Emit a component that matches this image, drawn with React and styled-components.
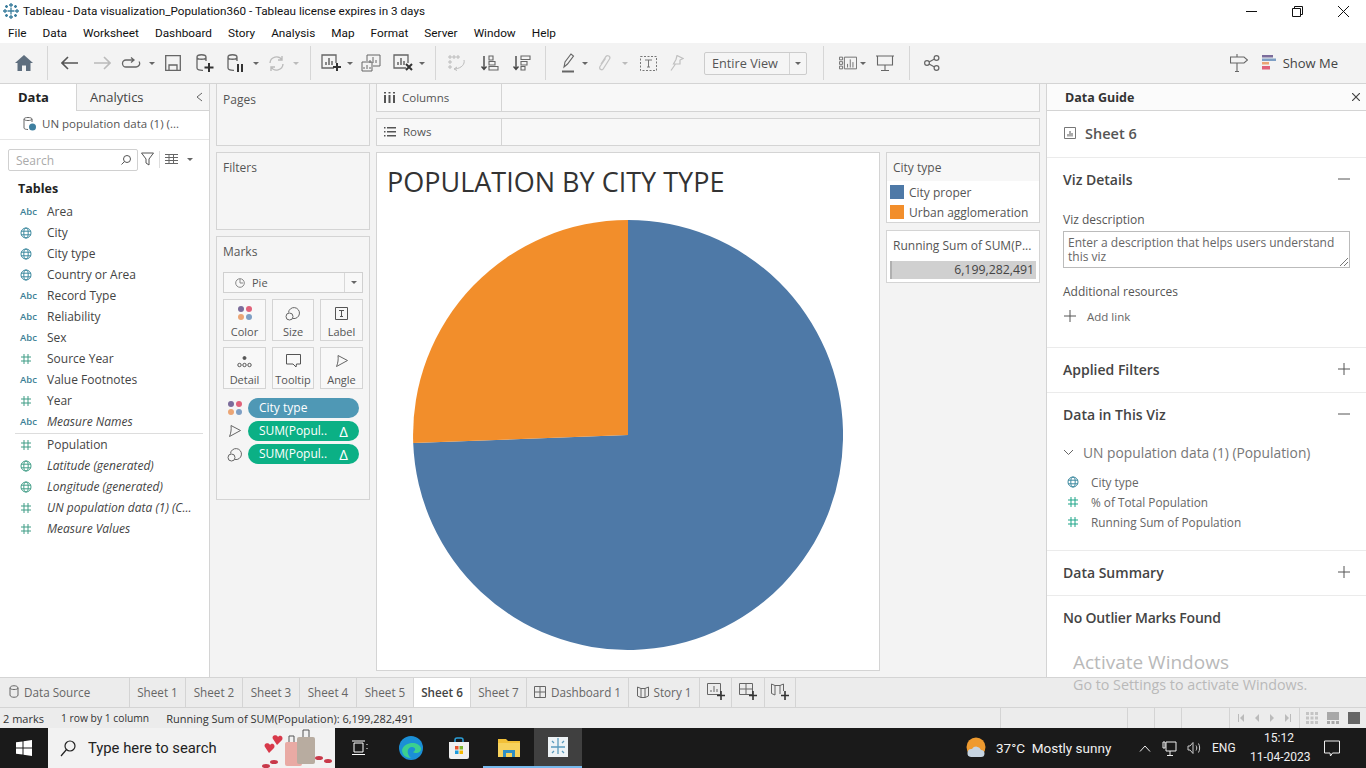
import styled, { createGlobalStyle } from "styled-components"

const Global = createGlobalStyle`
    html, body, #root { margin: 0; padding: 0; height: 100%; }
    body { font-family: "Open Sans", "Liberation Sans", sans-serif; color: #333; overflow: hidden; }
    * { box-sizing: border-box; }
`

const Page = styled.div`
    width: 1366px;
    height: 768px;
    display: flex;
    flex-direction: column;
    position: relative;
    background: #f3f3f3;
    overflow: hidden;
`

const TitleBar = styled.div`
    height: 22px;
    background: #fff;
    display: flex;
    align-items: center;
    padding-left: 2px;
    font-family: Roboto, sans-serif;
    font-size: 11.7px;
    color: #111;
    flex: none;
`
const TitleText = styled.span`
    margin-left: 3px;
`
const WinButtons = styled.div`
    margin-left: auto;
    display: flex;
    align-items: center;
`
const WinButton = styled.div`
    width: 46px;
    height: 20px;
    display: flex;
    align-items: center;
    justify-content: center;
`

const MenuBar = styled.div`
    height: 21px;
    background: #fff;
    display: flex;
    align-items: center;
    padding-left: 8px;
    gap: 16px;
    font-family: Roboto, sans-serif;
    font-size: 11.8px;
    color: #111;
    flex: none;
`

const Toolbar = styled.div`
    height: 41px;
    background: #f3f3f3;
    border-bottom: 1px solid #d4d4d4;
    display: flex;
    align-items: center;
    padding-left: 8px;
    flex: none;
`
const Slot = styled.div`
    width: ${(p) => p.$w}px;
    height: 34px;
    flex: none;
    display: flex;
    align-items: center;
    justify-content: center;
`
const Sep = styled.div`
    width: 1px;
    height: 34px;
    background: #d6d6d6;
`
const Caret = styled.div`
    width: 0;
    height: 0;
    border-left: 3px solid transparent;
    border-right: 3px solid transparent;
    border-top: 3px solid ${(p) => (p.$light ? "#bbb" : "#666")};
`
const FitBox = styled.div`
    width: 103px;
    height: 23px;
    margin-left: 16px;
    border: 1px solid #ccc;
    border-radius: 2px;
    background: #f5f5f5;
    display: flex;
    align-items: center;
    font-size: 12.7px;
    color: #555;
`
const FitText = styled.div`
    width: 85px;
    padding-left: 7px;
    border-right: 1px solid #d4d4d4;
    line-height: 21px;
`
const FitCaret = styled.div`
    flex: 1;
    display: flex;
    justify-content: center;
`
const ToolRight = styled.div`
    margin-left: auto;
    display: flex;
    align-items: center;
    padding-right: 28px;
    font-size: 13px;
    color: #444;
`
const ShowMe = styled.div`
    display: flex;
    align-items: center;
    gap: 6px;
    margin-left: 14px;
`

const Work = styled.div`
    flex: 1;
    display: flex;
    min-height: 0;
`

const DataPane = styled.div`
    width: 210px;
    background: #fff;
    border-right: 1px solid #d4d4d4;
    flex: none;
    display: flex;
    flex-direction: column;
`
const PaneTabs = styled.div`
    height: 27px;
    display: flex;
    font-size: 13px;
    color: #444;
    background: #f5f5f5;
    flex: none;
`
const DataTab = styled.div`
    width: 77px;
    background: #fff;
    border-right: 1px solid #d4d4d4;
    padding-left: 18px;
    line-height: 26px;
    font-weight: 700;
    color: #222;
`
const AnalyticsTab = styled.div`
    flex: 1;
    border-bottom: 1px solid #d4d4d4;
    padding: 0 6px 0 13px;
    line-height: 26px;
    display: flex;
    justify-content: space-between;
`
const SourceRow = styled.div`
    height: 29px;
    display: flex;
    align-items: center;
    gap: 5px;
    padding: 0 0 3px 22px;
    font-size: 11.5px;
    color: #555;
    border-bottom: 1px solid #e6e6e6;
    flex: none;
`
const SearchRow = styled.div`
    height: 34px;
    padding: 9px 0 0 8px;
    display: flex;
    align-items: flex-start;
    flex: none;
`
const SearchBox = styled.div`
    width: 130px;
    height: 22px;
    border: 1px solid #d0d0d0;
    border-radius: 2px;
    font-size: 12px;
    color: #aaa;
    display: flex;
    align-items: center;
    justify-content: space-between;
    padding: 0 5px 0 7px;
`
const SearchTools = styled.div`
    display: flex;
    align-items: center;
    height: 20px;
    padding-left: 3px;
    gap: 5px;
`
const CaretSlot = styled.div`
    width: 14px;
    display: flex;
    justify-content: center;
`
const ThinSep = styled.div`
    width: 1px;
    height: 17px;
    background: #ddd;
`
const TablesHead = styled.div`
    font-size: 12.5px;
    font-weight: 700;
    color: #222;
    padding: 5px 0 0 18px;
    height: 27px;
    line-height: 20px;
`
const FieldRow = styled.div`
    height: 21px;
    display: flex;
    align-items: center;
    font-size: 12px;
    color: #444;
    font-style: ${(p) => (p.$italic ? "italic" : "normal")};
    white-space: nowrap;
`
const FieldIcon = styled.div`
    width: 47px;
    padding-left: 20px;
    flex: none;
    display: flex;
    align-items: center;
`
const AbcTag = styled.span`
    font-size: 9.5px;
    font-weight: 600;
    font-style: normal;
    color: #3c7f96;
`
const FieldRule = styled.div`
    height: 1px;
    background: #ddd;
    margin: 1px 6px 0 15px;
`

const ShelfColumn = styled.div`
    width: 166px;
    padding: 0 6px;
    flex: none;
    display: flex;
    flex-direction: column;
    gap: 6px;
`
const Card = styled.div`
    height: ${(p) => p.$h}px;
    border: 1px solid #d4d4d4;
    border-top: ${(p) => (p.$flushTop ? "0" : "1px solid #d4d4d4")};
    background: #f5f5f5;
    padding: ${(p) => (p.$flushTop ? "9px" : "8px")} 6px 0;
    font-size: 12px;
    color: #555;
    line-height: 14px;
`
const MarkType = styled.div`
    height: 21px;
    margin-top: 13px;
    border: 1px solid #d0d0d0;
    background: #f8f8f8;
    display: flex;
    align-items: center;
    font-size: 11px;
    color: #555;
`
const MarkTypeLabel = styled.div`
    flex: 1;
    display: flex;
    align-items: center;
    gap: 7px;
    padding-left: 11px;
`
const MarkTypeCaret = styled.div`
    width: 18px;
    height: 100%;
    border-left: 1px solid #d8d8d8;
    display: flex;
    align-items: center;
    justify-content: center;
`
const MarkGrid = styled.div`
    margin-top: 6px;
    display: grid;
    grid-template-columns: 43px 42px 43px;
    grid-auto-rows: 42px;
    column-gap: 6px;
    row-gap: 6px;
`
const MarkButton = styled.div`
    border: 1px solid #d4d4d4;
    background: #f8f8f8;
    display: flex;
    flex-direction: column;
    align-items: center;
    font-size: 11px;
    color: #555;
    padding-top: 3px;
    line-height: 13px;
    white-space: nowrap;
`
const MarkIcon = styled.div`
    height: 20px;
    display: flex;
    align-items: center;
    justify-content: center;
    margin-bottom: 2px;
`
const PillRow = styled.div`
    margin-top: ${(p) => (p.$first ? "9px" : "3px")};
    display: flex;
    align-items: center;
    height: 20px;
`
const PillIcon = styled.div`
    width: 25px;
    display: flex;
    justify-content: center;
    padding-right: 1px;
`
const Pill = styled.div`
    width: 111px;
    height: 20px;
    border-radius: 10px;
    background: ${(p) => p.$bg};
    color: #fff;
    font-size: 12px;
    display: flex;
    align-items: center;
    justify-content: space-between;
    padding: 0 11px;
    white-space: nowrap;
`
const Delta = styled.span`
    font-size: 15px;
`

const MainColumn = styled.div`
    width: 664px;
    flex: none;
    display: flex;
    flex-direction: column;
    gap: 6px;
`
const Shelf = styled.div`
    height: 28px;
    border: 1px solid #d4d4d4;
    border-top: ${(p) => (p.$noTop ? "0" : "1px solid #d4d4d4")};
    background: #f8f8f8;
    display: flex;
    flex: none;
`
const ShelfName = styled.div`
    width: 125px;
    border-right: 1px solid #d4d4d4;
    display: flex;
    align-items: center;
    gap: 7px;
    padding: 0 0 1px 7px;
    font-size: 11.5px;
    color: #555;
`
const VizRow = styled.div`
    display: flex;
    gap: 6px;
    flex: none;
`
const ViewCard = styled.div`
    width: 504px;
    height: 519px;
    background: #fff;
    border: 1px solid #d4d4d4;
    display: flex;
    flex-direction: column;
    align-items: center;
`
const VizTitle = styled.div`
    align-self: flex-start;
    padding: 12px 0 0 10px;
    height: 67px;
    font-size: 27px;
    line-height: 34px;
    color: #333;
    white-space: nowrap;
`
const LegendColumn = styled.div`
    width: 154px;
    display: flex;
    flex-direction: column;
    gap: 7px;
`
const LegendCard = styled.div`
    border: 1px solid #d4d4d4;
    background: #fff;
`
const LegendHead = styled.div`
    background: #f7f7f7;
    height: 28px;
    margin-bottom: 1px;
    padding-left: 6px;
    display: flex;
    align-items: center;
    font-size: 12px;
    color: #555;
`
const LegendItem = styled.div`
    height: 20px;
    display: flex;
    align-items: center;
    gap: 5px;
    padding-left: 3px;
    font-size: 12px;
    color: #555;
    white-space: nowrap;
`
const Swatch = styled.div`
    width: 14px;
    height: 14px;
    background: ${(p) => p.$c};
`
const RangeHead = styled.div`
    height: 30px;
    padding: 0 0 2px 6px;
    display: flex;
    align-items: center;
    font-size: 12px;
    color: #555;
    white-space: nowrap;
`
const RangeBar = styled.div`
    height: 18px;
    margin: 0 3px 3px;
    background: #d0d0d0;
    border-left: 2px solid #b0b0b0;
    font-size: 12.3px;
    line-height: 18px;
    text-align: right;
    padding-right: 2px;
    color: #444;
`

const Guide = styled.div`
    width: 320px;
    margin-left: 6px;
    background: #fff;
    border-left: 1px solid #d4d4d4;
    flex: none;
    display: flex;
    flex-direction: column;
`
const GuideTop = styled.div`
    height: 27px;
    background: #fbfbfb;
    border-bottom: 1px solid #d4d4d4;
    padding: 0 6px 0 18px;
    display: flex;
    align-items: center;
    justify-content: space-between;
    font-size: 12.5px;
    font-weight: 700;
    color: #333;
`
const Section = styled.div`
    height: ${(p) => p.$h}px;
    padding: 0 16px;
    border-bottom: ${(p) => (p.$noLine ? "0" : "1px solid #ebebeb")};
    flex: none;
`
const SheetRow = styled.div`
    display: flex;
    align-items: center;
    gap: 9px;
    height: 44px;
    font-size: 14.5px;
    font-weight: 600;
    color: #555;
    padding-left: 1px;
`
const SectionHead = styled.div`
    height: 44px;
    padding-bottom: 2px;
    display: flex;
    align-items: center;
    justify-content: space-between;
    font-size: 14px;
    font-weight: 600;
    letter-spacing: ${(p) => (p.$tight ? "-0.2px" : "0")};
    color: #444;
    white-space: nowrap;
`
const SmallLabel = styled.div`
    font-size: 12px;
    color: #555;
    line-height: 15px;
    margin-top: ${(p) => p.$mt}px;
`
const DescBox = styled.div`
    position: relative;
    height: 37px;
    margin-top: 4px;
    border: 1px solid #bbb;
    padding: 4px 4px 0;
    font-size: 12px;
    line-height: 14px;
    color: #666;
`
const Resize = styled.svg`
    position: absolute;
    right: 1px;
    bottom: 1px;
`
const AddLink = styled.div`
    display: flex;
    align-items: center;
    gap: 11px;
    height: 20px;
    margin-top: 7px;
    padding-left: 1px;
    font-size: 11.5px;
    color: #666;
`
const SourceName = styled.div`
    display: flex;
    align-items: center;
    gap: 9px;
    font-size: 13.8px;
    color: #777;
    height: 20px;
    margin-top: 5px;
    white-space: nowrap;
`
const GuideFields = styled.div`
    margin-top: 10px;
`
const GuideField = styled.div`
    display: flex;
    align-items: center;
    gap: 12px;
    height: 20px;
    padding-left: 4px;
    font-size: 11.8px;
    color: #666;
`

const Tabs = styled.div`
    height: 31px;
    background: #ececec;
    border-top: 1px solid #d4d4d4;
    border-bottom: 1px solid #d4d4d4;
    display: flex;
    flex: none;
    font-size: 11.7px;
    color: #666;
`
const Tab = styled.div`
    width: ${(p) => p.$w}px;
    padding-bottom: 2px;
    display: flex;
    align-items: center;
    justify-content: center;
    gap: 5px;
    white-space: nowrap;
    border-right: 1px solid #d4d4d4;
    background: ${(p) => (p.$active ? "#fff" : "transparent")};
    font-weight: ${(p) => (p.$active ? 600 : 400)};
    color: ${(p) => (p.$active ? "#444" : "#666")};
`
const SourceTab = styled(Tab)`
    justify-content: flex-start;
    padding-left: 9px;
`
const StatusBar = styled.div`
    height: 20px;
    background: #ececec;
    display: flex;
    align-items: center;
    flex: none;
    font-size: 11px;
    color: #333;
    padding-left: 3px;
`
const StatusText = styled.span`
    font-size: ${(p) => p.$fs || 11}px;
    margin-right: ${(p) => p.$mr}px;
    white-space: nowrap;
`
const StatusCell = styled.div`
    width: ${(p) => p.$w}px;
    height: 20px;
    border-left: 1px solid #d4d4d4;
    flex: none;
    display: flex;
    align-items: center;
    justify-content: center;
    gap: ${(p) => p.$gap || 0}px;
`
const StatusRight = styled.div`
    margin-left: auto;
    display: flex;
`

const Taskbar = styled.div`
    height: 40px;
    background: #1a1a1a;
    display: flex;
    align-items: center;
    flex: none;
    color: #fff;
`
const StartBtn = styled.div`
    width: 48px;
    display: flex;
    justify-content: center;
`
const TaskSearch = styled.div`
    width: 287px;
    height: 40px;
    background: #f2f2f2;
    display: flex;
    align-items: center;
    color: #222;
    font-family: Roboto, sans-serif;
    font-size: 14.8px;
    padding-left: 12px;
    gap: 12px;
    white-space: nowrap;
`
const SearchArt = styled.svg`
    margin-left: auto;
`
const TaskSlot = styled.div`
    width: ${(p) => p.$w}px;
    height: 40px;
    margin-left: ${(p) => p.$ml || 0}px;
    flex: none;
    display: flex;
    align-items: center;
    justify-content: center;
    background: ${(p) => (p.$active ? "#404040" : "transparent")};
    border-bottom: ${(p) => (p.$running ? "2px solid #76b9ed" : "0")};
`
const Tray = styled.div`
    margin-left: auto;
    padding-right: 26px;
    display: flex;
    align-items: center;
    font-family: Roboto, sans-serif;
    font-size: 13.5px;
    color: #f0f0f0;
`
const TrayItem = styled.div`
    width: ${(p) => p.$w}px;
    margin-left: ${(p) => p.$ml}px;
    flex: none;
    display: flex;
    align-items: center;
    white-space: nowrap;
    font-size: ${(p) => p.$fs || 13.5}px;
`
const Clock = styled.div`
    width: 58px;
    margin-left: 14px;
    flex: none;
    text-align: center;
    font-size: 12px;
    line-height: 19px;
    white-space: nowrap;
`
const Activate = styled.div`
    position: absolute;
    left: 1073px;
    top: 650px;
    font-size: 19px;
    line-height: 25px;
    color: #b9b9b9;
    pointer-events: none;
`
const ActivateSub = styled.div`
    font-size: 14.3px;
    line-height: 20px;
`

const stroke = { fill: "none", stroke: "#666", strokeWidth: 1.3 }

function TableauMark({ size = 18, c = "#3d7f9e" }) {
    const bar = (x, y, l) => (
        <path d={`M${x - l} ${y}H${x + l}M${x} ${y - l}V${y + l}`} stroke={c} strokeWidth="1.3" />
    )
    return (
        <svg width={size} height={size} viewBox="0 0 18 18">
            {bar(9, 9, 3.5)}
            {bar(9, 3, 2)}
            {bar(9, 15, 2)}
            {bar(3, 9, 2)}
            {bar(15, 9, 2)}
            {bar(4.5, 4.5, 1.5)}
            {bar(13.5, 4.5, 1.5)}
            {bar(4.5, 13.5, 1.5)}
            {bar(13.5, 13.5, 1.5)}
        </svg>
    )
}

function Globe({ c = "#3e8aa0" }) {
    return (
        <svg width="12" height="12" viewBox="0 0 12 12" fill="none" stroke={c} strokeWidth="1">
            <circle cx="6" cy="6" r="5" />
            <ellipse cx="6" cy="6" rx="2.2" ry="5" />
            <path d="M1 4.2H11M1 7.8H11" />
        </svg>
    )
}

function Hash({ c = "#3f9c85" }) {
    return (
        <svg width="12" height="12" viewBox="0 0 12 12" fill="none" stroke={c} strokeWidth="1">
            <path d="M4 1V11M8 1V11M1 4H11M1 8H11" />
        </svg>
    )
}

function Dots() {
    return (
        <svg width="16" height="16" viewBox="0 0 16 16">
            <circle cx="4" cy="4" r="3" fill="#7b6c9b" />
            <circle cx="12" cy="4" r="3" fill="#e0627a" />
            <circle cx="4" cy="12" r="3" fill="#eba575" />
            <circle cx="12" cy="12" r="3" fill="#7e9fc4" />
        </svg>
    )
}

function SizeIcon() {
    return (
        <svg width="16" height="16" viewBox="0 0 16 16" {...stroke} strokeWidth="1">
            <path d="M3.5 7.5a5.5 5.5 0 1 1 4.5 6" />
            <circle cx="4.5" cy="11.5" r="3.5" />
        </svg>
    )
}

function AngleIcon() {
    return (
        <svg width="14" height="14" viewBox="0 0 14 14" {...stroke} strokeWidth="1">
            <path d="M3 1.5L12.5 6.5L1.5 12.5C3 9 3.5 5 3 1.5Z" />
        </svg>
    )
}

function SheetIcon({ add, clear }) {
    return (
        <svg width="22" height="20" viewBox="0 0 22 20" {...stroke}>
            <path d="M14 15H2V2H16V10" />
            <path d="M6 12V9M9 12V5M12 12V8" strokeWidth="1.5" />
            {add && <path d="M17 10V18M13 14H21" stroke="#333" strokeWidth="2" />}
            {clear && <path d="M14 11L20 17M20 11L14 17" stroke="#333" strokeWidth="2" />}
        </svg>
    )
}

function DbIcon({ badge }) {
    return (
        <svg width="22" height="22" viewBox="0 0 22 22" {...stroke}>
            <path d="M3 5C3 2 12 2 12 5V9M3 5V16C3 18 6 18.5 9 18.4M3 5C3 8 12 8 12 5" />
            {badge === "add" && <path d="M15 11V20M10.5 15.5H19.5" stroke="#333" strokeWidth="2" />}
            {badge === "pause" && <path d="M13 12V20M17 12V20" stroke="#333" strokeWidth="2" />}
        </svg>
    )
}

function PieGlyph() {
    return (
        <svg width="10" height="10" viewBox="0 0 10 10" fill="none" stroke="#888" strokeWidth="1">
            <circle cx="5" cy="5" r="4.3" />
            <path d="M5 1V5H8" />
        </svg>
    )
}

function Plus({ s = 12, c = "#555" }) {
    return (
        <svg width={s} height={s} viewBox="0 0 12 12" stroke={c} strokeWidth="1">
            <path d="M6 0V12M0 6H12" />
        </svg>
    )
}

function Minus() {
    return (
        <svg width="12" height="12" viewBox="0 0 12 12" stroke="#555" strokeWidth="1">
            <path d="M0 6H12" />
        </svg>
    )
}

const fields = [
    ["abc", "Area"],
    ["geo", "City"],
    ["geo", "City type"],
    ["geo", "Country or Area"],
    ["abc", "Record Type"],
    ["abc", "Reliability"],
    ["abc", "Sex"],
    ["num", "Source Year"],
    ["abc", "Value Footnotes"],
    ["num", "Year"],
    ["abc", "Measure Names", true],
]
const measures = [
    ["num", "Population"],
    ["geo2", "Latitude (generated)", true],
    ["geo2", "Longitude (generated)", true],
    ["num", "UN population data (1) (C...", true],
    ["num", "Measure Values", true],
]
const menus = ["File", "Data", "Worksheet", "Dashboard", "Story", "Analysis", "Map", "Format", "Server", "Window", "Help"]
const sheets = [
    ["Sheet 1", 56],
    ["Sheet 2", 57],
    ["Sheet 3", 57],
    ["Sheet 4", 57],
    ["Sheet 5", 57],
    ["Sheet 6", 57],
    ["Sheet 7", 56],
]

function Field({ kind, name, italic }) {
    return (
        <FieldRow $italic={italic}>
            <FieldIcon>
                {kind === "abc" && <AbcTag>Abc</AbcTag>}
                {kind === "geo" && <Globe />}
                {kind === "geo2" && <Globe c="#45a08a" />}
                {kind === "num" && <Hash />}
            </FieldIcon>
            {name}
        </FieldRow>
    )
}

export default function App() {
    return (
        <Page>
            <Global />
            <TitleBar>
                <TableauMark />
                <TitleText>Tableau - Data visualization_Population360 - Tableau license expires in 3 days</TitleText>
                <WinButtons>
                    <WinButton>
                        <svg width="11" height="11" stroke="#111"><path d="M0 5.5H11" /></svg>
                    </WinButton>
                    <WinButton>
                        <svg width="11" height="11" fill="none" stroke="#111"><path d="M.5 2.5H8.5V10.5H.5ZM2.5 2.5V.5H10.5V8.5H8.5" /></svg>
                    </WinButton>
                    <WinButton>
                        <svg width="11" height="11" stroke="#111"><path d="M0 0L11 11M11 0L0 11" /></svg>
                    </WinButton>
                </WinButtons>
            </TitleBar>
            <MenuBar>
                {menus.map((m) => (
                    <span key={m}>{m}</span>
                ))}
            </MenuBar>
            <Toolbar>
                <Slot $w={32}>
                    <svg width="18" height="16" viewBox="0 0 18 16" fill="#5e6e7e"><path d="M9 0L18 8H15.5V16H11V10.5H7V16H2.5V8H0Z" /></svg>
                </Slot>
                <Slot $w={14}><Sep /></Slot>
                <Slot $w={32}>
                    <svg width="18" height="14" viewBox="0 0 18 14" fill="none" stroke="#555" strokeWidth="1.6"><path d="M17 7H1M7 1L1 7L7 13" /></svg>
                </Slot>
                <Slot $w={32}>
                    <svg width="18" height="14" viewBox="0 0 18 14" fill="none" stroke="#bbb" strokeWidth="1.6"><path d="M1 7H17M11 1L17 7L11 13" /></svg>
                </Slot>
                <Slot $w={26}>
                    <svg width="20" height="12" viewBox="0 0 20 12" {...stroke}><path d="M12 3H5a3.5 3.5 0 0 0 0 7H15a3.5 3.5 0 0 0 3-5.5M10 0.5L13 3L10 5.5" /></svg>
                </Slot>
                <Slot $w={16}><Caret /></Slot>
                <Slot $w={26}>
                    <svg width="16" height="16" viewBox="0 0 16 16" {...stroke}><path d="M.7.7H15.3V15.3H.7ZM4 15V10H12V15" /></svg>
                </Slot>
                <Slot $w={38}><DbIcon badge="add" /></Slot>
                <Slot $w={24}><DbIcon badge="pause" /></Slot>
                <Slot $w={16}><Caret /></Slot>
                <Slot $w={24}>
                    <svg width="17" height="17" viewBox="0 0 17 17" fill="none" stroke="#bbb" strokeWidth="1.4"><path d="M2 8a6.5 6.5 0 0 1 12-3M15 9a6.5 6.5 0 0 1-12 3M14 1V5H10M3 16V12H7" /></svg>
                </Slot>
                <Slot $w={16}><Caret $light /></Slot>
                <Slot $w={12}><Sep /></Slot>
                <Slot $w={30}><SheetIcon add /></Slot>
                <Slot $w={8}><Caret /></Slot>
                <Slot $w={34}>
                    <svg width="20" height="18" viewBox="0 0 20 18" {...stroke} strokeWidth="1"><path d="M6 7V1H19V12H12M9 9V6M12 9V3M15 9V6M1 8H11V17H1ZM3 15V13M6 15V11M9 15V13" /></svg>
                </Slot>
                <Slot $w={30}><SheetIcon clear /></Slot>
                <Slot $w={8}><Caret /></Slot>
                <Slot $w={18}><Sep /></Slot>
                <Slot $w={26}>
                    <svg width="18" height="16" viewBox="0 0 18 16" fill="none" stroke="#bbb"><path d="M1 1H3V3H1ZM5 1H7V3H5ZM9 1H11V3H9ZM1 6H3V8H1ZM1 11H3V13H1ZM16 5C17 9 14 13 7 14M9 12L6 14L9 15.5" /></svg>
                </Slot>
                <Slot $w={40}>
                    <svg width="18" height="16" viewBox="0 0 18 16" {...stroke} strokeWidth="1.1"><path d="M3 1V14M.5 11.5L3 14.5L5.5 11.5" strokeWidth="1.4" stroke="#444" /><path d="M8 1H12V5H8ZM8 6.5H14V10H8ZM8 11.5H17V15H8Z" /></svg>
                </Slot>
                <Slot $w={24}>
                    <svg width="18" height="16" viewBox="0 0 18 16" {...stroke} strokeWidth="1.1"><path d="M3 1V14M.5 11.5L3 14.5L5.5 11.5" strokeWidth="1.4" stroke="#444" /><path d="M8 1H17V4.5H8ZM8 6.5H14V10H8ZM8 11.5H12V15H8Z" /></svg>
                </Slot>
                <Slot $w={22}><Sep /></Slot>
                <Slot $w={24}>
                    <svg width="14" height="20" viewBox="0 0 14 20" {...stroke} strokeWidth="1.1"><path d="M3 14L4 9L10 1L12.5 3L6.5 11Z" /><path d="M1 18.5H13" strokeWidth="2" /></svg>
                </Slot>
                <Slot $w={10}><Caret /></Slot>
                <Slot $w={30}>
                    <svg width="14" height="18" viewBox="0 0 14 18" fill="none" stroke="#c4c4c4" strokeWidth="1.3"><path d="M3 10L8 2.5C9.5.5 13 2.5 11.5 5L5.5 14.5C4 17 .5 15 2 12.5L7.5 4.5" /></svg>
                </Slot>
                <Slot $w={10}><Caret $light /></Slot>
                <Slot $w={36}>
                    <svg width="17" height="15" viewBox="0 0 17 15" fill="none" stroke="#777"><path d="M.5.5H16.5V14.5H.5Z" strokeDasharray="2 1.5" /><path d="M5 4H12M8.5 4V11M7 11H10" /></svg>
                </Slot>
                <Slot $w={22}>
                    <svg width="14" height="16" viewBox="0 0 14 16" fill="none" stroke="#c0c0c0" strokeWidth="1.2"><path d="M7 .5L13 3.5L10 5L10 9L3.5 9L6 4.5ZM5.5 9L1 15.5" /></svg>
                </Slot>
                <FitBox>
                    <FitText>Entire View</FitText>
                    <FitCaret><Caret /></FitCaret>
                </FitBox>
                <Slot $w={32}><Sep /></Slot>
                <Slot $w={18}>
                    <svg width="20" height="14" viewBox="0 0 20 14" {...stroke} strokeWidth="1"><path d="M.5.5H4V3.5H.5ZM.5 5.5H4V8.5H.5ZM.5 10.5H4V13.5H.5ZM6 .5H19.5V13.5H6ZM9.5 12V8M12.5 12V3M15.5 12V6" /></svg>
                </Slot>
                <Slot $w={12}><Caret /></Slot>
                <Slot $w={32}>
                    <svg width="18" height="16" viewBox="0 0 18 16" {...stroke} strokeWidth="1.1"><path d="M0 1H18M1.5 1V10H16.5V1M9 10V15M5 15.5H13" /></svg>
                </Slot>
                <Slot $w={16}><Sep /></Slot>
                <Slot $w={30}>
                    <svg width="16" height="16" viewBox="0 0 16 16" {...stroke} strokeWidth="1.2"><circle cx="3" cy="8" r="2.4" /><circle cx="12.5" cy="3" r="2.4" /><circle cx="12.5" cy="13" r="2.4" /><path d="M5 7L10.5 4M5 9L10.5 12" /></svg>
                </Slot>
                <ToolRight>
                    <svg width="18" height="18" viewBox="0 0 18 18" {...stroke} strokeWidth="1.1"><path d="M.5 3H14L17.5 6L14 9H.5ZM7 0V3M7 9V18M5 17.5H9" /></svg>
                    <ShowMe>
                        <svg width="15" height="16" viewBox="0 0 15 16">
                            <rect width="11" height="2.5" fill="#7b6c9b" />
                            <rect y="3.5" width="14" height="2.5" fill="#7e9fc4" />
                            <rect y="7" width="7" height="2.5" fill="#eba575" />
                            <rect y="11" width="8" height="3.5" fill="#e0627a" />
                        </svg>
                        Show Me
                    </ShowMe>
                </ToolRight>
            </Toolbar>
            <Work>
                <DataPane>
                    <PaneTabs>
                        <DataTab>Data</DataTab>
                        <AnalyticsTab>
                            Analytics
                            <svg width="7" height="26" viewBox="0 0 7 26" fill="none" stroke="#666"><path d="M6 9L1 13L6 17" /></svg>
                        </AnalyticsTab>
                    </PaneTabs>
                    <SourceRow>
                        <svg width="15" height="15" viewBox="0 0 15 15">
                            <path d="M2 3C2 1 10 1 10 3V6M2 3V12C2 13 4 13.5 6 13.5M2 3C2 5 10 5 10 3" fill="none" stroke="#666" />
                            <circle cx="10.5" cy="11" r="3.5" fill="#3e7fa0" />
                        </svg>
                        UN population data (1) (...
                    </SourceRow>
                    <SearchRow>
                        <SearchBox>
                            Search
                            <svg width="12" height="12" viewBox="0 0 12 12" fill="none" stroke="#555"><circle cx="7" cy="5" r="3.5" /><path d="M4.5 7.5L1.5 10.5" /></svg>
                        </SearchBox>
                        <SearchTools>
                            <svg width="13" height="14" viewBox="0 0 13 14" fill="none" stroke="#555"><path d="M.5 1H12.5L8 7V13L5 11V7Z" /></svg>
                            <ThinSep />
                            <svg width="13" height="10" viewBox="0 0 13 10" fill="none" stroke="#666"><path d="M0 .5H13M0 3.5H13M0 6.5H13M0 9.5H13M4 0V10M8.5 0V10" /></svg>
                            <CaretSlot><Caret /></CaretSlot>
                        </SearchTools>
                    </SearchRow>
                    <TablesHead>Tables</TablesHead>
                    {fields.map(([k, n, i]) => (
                        <Field key={n} kind={k} name={n} italic={i} />
                    ))}
                    <FieldRule />
                    {measures.map(([k, n, i]) => (
                        <Field key={n} kind={k} name={n} italic={i} />
                    ))}
                </DataPane>
                <ShelfColumn>
                    <Card $h={62} $flushTop>Pages</Card>
                    <Card $h={78}>Filters</Card>
                    <Card $h={264}>
                        Marks
                        <MarkType>
                            <MarkTypeLabel><PieGlyph />Pie</MarkTypeLabel>
                            <MarkTypeCaret><Caret /></MarkTypeCaret>
                        </MarkType>
                        <MarkGrid>
                            <MarkButton><MarkIcon><Dots /></MarkIcon>Color</MarkButton>
                            <MarkButton><MarkIcon><SizeIcon /></MarkIcon>Size</MarkButton>
                            <MarkButton>
                                <MarkIcon>
                                    <svg width="13" height="13" viewBox="0 0 13 13" fill="none" stroke="#555"><path d="M.5.5H12.5V12.5H.5ZM4 3.5H9M6.5 3.5V9.5M5 9.5H8" /></svg>
                                </MarkIcon>
                                Label
                            </MarkButton>
                            <MarkButton>
                                <MarkIcon>
                                    <svg width="15" height="13" viewBox="0 0 15 13" fill="none" stroke="#555"><circle cx="7.5" cy="3" r="1.5" fill="#555" /><circle cx="2.5" cy="10" r="1.7" /><circle cx="7.5" cy="10" r="1.7" /><circle cx="12.5" cy="10" r="1.7" /></svg>
                                </MarkIcon>
                                Detail
                            </MarkButton>
                            <MarkButton>
                                <MarkIcon>
                                    <svg width="15" height="14" viewBox="0 0 15 14" fill="none" stroke="#555"><path d="M.5.5H14.5V10H10.5L10 13L7 10H.5Z" /></svg>
                                </MarkIcon>
                                Tooltip
                            </MarkButton>
                            <MarkButton><MarkIcon><AngleIcon /></MarkIcon>Angle</MarkButton>
                        </MarkGrid>
                        <PillRow $first>
                            <PillIcon><Dots /></PillIcon>
                            <Pill $bg="#4f98b5">City type</Pill>
                        </PillRow>
                        <PillRow>
                            <PillIcon><AngleIcon /></PillIcon>
                            <Pill $bg="#0bb085">SUM(Popul..<Delta>Δ</Delta></Pill>
                        </PillRow>
                        <PillRow>
                            <PillIcon><SizeIcon /></PillIcon>
                            <Pill $bg="#0bb085">SUM(Popul..<Delta>Δ</Delta></Pill>
                        </PillRow>
                    </Card>
                </ShelfColumn>
                <MainColumn>
                    <Shelf $noTop>
                        <ShelfName>
                            <svg width="11" height="11" viewBox="0 0 11 11" fill="#555"><path d="M0 3H2V11H0ZM4.5 3H6.5V11H4.5ZM9 3H11V11H9ZM0 0H2V1.5H0ZM4.5 0H6.5V1.5H4.5ZM9 0H11V1.5H9Z" /></svg>
                            Columns
                        </ShelfName>
                    </Shelf>
                    <Shelf>
                        <ShelfName>
                            <svg width="12" height="11" viewBox="0 0 12 11" fill="#555"><path d="M3 1H12V2.5H3ZM3 5H12V6.5H3ZM3 9H12V10.5H3ZM0 1H1.5V2.5H0ZM0 5H1.5V6.5H0ZM0 9H1.5V10.5H0Z" /></svg>
                            Rows
                        </ShelfName>
                    </Shelf>
                    <VizRow>
                        <ViewCard>
                            <VizTitle>POPULATION BY CITY TYPE</VizTitle>
                            <svg width="430" height="430" viewBox="0 0 430 430">
                                <path d="M215 215L215 0A215 215 0 1 1 .2 223Z" fill="#4e79a7" />
                                <path d="M215 215L.2 223A215 215 0 0 1 215 0Z" fill="#f28e2b" />
                            </svg>
                        </ViewCard>
                        <LegendColumn>
                            <LegendCard>
                                <LegendHead>City type</LegendHead>
                                <LegendItem><Swatch $c="#4e79a7" />City proper</LegendItem>
                                <LegendItem><Swatch $c="#f28e2b" />Urban agglomeration</LegendItem>
                            </LegendCard>
                            <LegendCard>
                                <RangeHead>Running Sum of SUM(P...</RangeHead>
                                <RangeBar>6,199,282,491</RangeBar>
                            </LegendCard>
                        </LegendColumn>
                    </VizRow>
                </MainColumn>
                <Guide>
                    <GuideTop>
                        Data Guide
                        <svg width="8" height="8" stroke="#444" strokeWidth="1.2"><path d="M0 0L8 8M8 0L0 8" /></svg>
                    </GuideTop>
                    <Section $h={47}>
                        <SheetRow>
                            <svg width="12" height="12" viewBox="0 0 12 12"><path d="M.5.5H11.5V11.5H.5Z" fill="none" stroke="#777" /><path d="M3 9.5V7H5V4H7V6H9V9.5Z" fill="#aaa" /></svg>
                            Sheet 6
                        </SheetRow>
                    </Section>
                    <Section $h={190}>
                        <SectionHead>Viz Details<Minus /></SectionHead>
                        <SmallLabel $mt={10}>Viz description</SmallLabel>
                        <DescBox>
                            Enter a description that helps users understand this viz
                            <Resize width="9" height="9" stroke="#777"><path d="M1 9L9 1M5 9L9 5" /></Resize>
                        </DescBox>
                        <SmallLabel $mt={16}>Additional resources</SmallLabel>
                        <AddLink><Plus />Add link</AddLink>
                    </Section>
                    <Section $h={45}>
                        <SectionHead>Applied Filters<Plus /></SectionHead>
                    </Section>
                    <Section $h={158}>
                        <SectionHead>Data in This Viz<Minus /></SectionHead>
                        <SourceName>
                            <svg width="11" height="7" viewBox="0 0 11 7" fill="none" stroke="#666"><path d="M1 1L5.5 5.5L10 1" /></svg>
                            UN population data (1) (Population)
                        </SourceName>
                        <GuideFields>
                            <GuideField><Globe />City type</GuideField>
                            <GuideField><Hash c="#1fa589" />% of Total Population</GuideField>
                            <GuideField><Hash c="#1fa589" />Running Sum of Population</GuideField>
                        </GuideFields>
                    </Section>
                    <Section $h={45}>
                        <SectionHead>Data Summary<Plus /></SectionHead>
                    </Section>
                    <Section $h={44} $noLine>
                        <SectionHead $tight>No Outlier Marks Found</SectionHead>
                    </Section>
                </Guide>
            </Work>
            <Tabs>
                <SourceTab $w={130}>
                    <svg width="10" height="13" viewBox="0 0 10 13" fill="none" stroke="#666"><path d="M1 3C1 0 9 0 9 3V10C9 13 1 13 1 10ZM1 3C1 5 9 5 9 3" /></svg>
                    Data Source
                </SourceTab>
                {sheets.map(([n, w]) => (
                    <Tab key={n} $w={w} $active={n === "Sheet 6"}>{n}</Tab>
                ))}
                <Tab $w={102}>
                    <svg width="12" height="12" fill="none" stroke="#666"><path d="M.5.5H11.5V11.5H.5ZM6 .5V11.5M.5 6H11.5" /></svg>
                    Dashboard 1
                </Tab>
                <Tab $w={71}>
                    <svg width="12" height="12" viewBox="0 0 12 12" fill="none" stroke="#666"><path d="M.5 1L4 2.5V11.5L.5 10ZM4 2.5L8 2.5V11.5H4M8 2.5L11.5 1V10L8 11.5" /></svg>
                    Story 1
                </Tab>
                <Tab $w={32}>
                    <svg width="18" height="17" viewBox="0 0 18 17" fill="none" stroke="#666"><path d="M.5.5H13.5V11.5H.5ZM4 9V7M7 9V3M10 9V6" /><path d="M14 8V17M10 12.5H18" stroke="#333" strokeWidth="1.6" /></svg>
                </Tab>
                <Tab $w={33}>
                    <svg width="18" height="17" viewBox="0 0 18 17" fill="none" stroke="#666"><path d="M.5.5H13.5V11.5H.5ZM7 .5V11.5M.5 6H13.5" /><path d="M14 8V17M10 12.5H18" stroke="#333" strokeWidth="1.6" /></svg>
                </Tab>
                <Tab $w={31}>
                    <svg width="18" height="17" viewBox="0 0 18 17" fill="none" stroke="#666"><path d="M.5 1L4 2.5V12L.5 10.5ZM4 2.5H9V11M9 2.5L12.5 1V8" /><path d="M14 8V17M10 12.5H18" stroke="#333" strokeWidth="1.6" /></svg>
                </Tab>
            </Tabs>
            <StatusBar>
                <StatusText $mr={17}>2 marks</StatusText>
                <StatusText $mr={17} $fs={10.3}>1 row by 1 column</StatusText>
                <StatusText $mr={0}>Running Sum of SUM(Population): 6,199,282,491</StatusText>
                <StatusRight>
                    <StatusCell $w={127} />
                    <StatusCell $w={27} />
                    <StatusCell $w={27} />
                    <StatusCell $w={48} />
                    <StatusCell $w={70}>
                        <svg width="54" height="8" viewBox="0 0 54 8" fill="#bbb"><path d="M0 0H1V8H0ZM2 4L6 0V8ZM17 4L21 0V8ZM32 0L36 4L32 8ZM47 0L51 4L47 8ZM52 0H53V8H52Z" /></svg>
                    </StatusCell>
                    <StatusCell $w={67} $gap={9}>
                        <svg width="12" height="12" viewBox="0 0 12 12" fill="#c4c4c4"><path d="M0 0H3V3H0ZM4.5 0H7.5V3H4.5ZM9 0H12V3H9ZM0 4.5H3V7.5H0ZM4.5 4.5H7.5V7.5H4.5ZM9 4.5H12V7.5H9ZM0 9H3V12H0ZM4.5 9H7.5V12H4.5ZM9 9H12V12H9Z" /></svg>
                        <svg width="12" height="12" viewBox="0 0 12 12" fill="#a8a8a8"><path d="M0 0H12V8H0ZM0 9H3V12H0ZM4.5 9H7.5V12H4.5ZM9 9H12V12H9Z" /></svg>
                        <svg width="12" height="12" viewBox="0 0 12 12" fill="#666"><path d="M0 0H12V12H0Z" /></svg>
                    </StatusCell>
                </StatusRight>
            </StatusBar>
            <Taskbar>
                <StartBtn>
                    <svg width="16" height="16" viewBox="0 0 16 16" fill="#fff"><path d="M0 2.3L6.5 1.4V7.5H0ZM7.5 1.2L16 0V7.5H7.5ZM0 8.5H6.5V14.6L0 13.7ZM7.5 8.5H16V16L7.5 14.8Z" /></svg>
                </StartBtn>
                <TaskSearch>
                    <svg width="16" height="17" viewBox="0 0 16 17" fill="none" stroke="#222" strokeWidth="1.2"><circle cx="10" cy="6" r="5" /><path d="M6.5 9.5L1 16" /></svg>
                    Type here to search
                    <SearchArt width="79" height="40" viewBox="0 0 79 40">
                        <path d="M17 11c-2-4 4-5 5-2 2-3 6 0 4 3l-5 5Z" fill="#d8394a" />
                        <path d="M9 19c-2-4 4-5 5-2 2-3 6 0 4 3l-5 5Z" fill="#d8394a" />
                        <rect x="29" y="14" width="17" height="24" rx="2" fill="#e9aaa4" />
                        <rect x="41" y="9" width="18" height="27" rx="2" fill="#b8aca0" />
                        <path d="M33 14V8M38 14V8M33 8H38M47 9V2M53 9V2M47 2H53" stroke="#555" fill="none" />
                        <ellipse cx="18" cy="34" rx="4" ry="2" fill="#c8394a" />
                        <ellipse cx="10" cy="38" rx="4" ry="2" fill="#c8394a" />
                        <ellipse cx="63" cy="30" rx="4" ry="2" fill="#c8394a" />
                        <ellipse cx="72" cy="33" rx="4" ry="2" fill="#c8394a" />
                    </SearchArt>
                </TaskSearch>
                <TaskSlot $w={44} $ml={3}>
                    <svg width="16" height="16" viewBox="0 0 16 16" fill="none" stroke="#fff"><path d="M2 3H11V12H2ZM0 1H13M0 14.5H13M15 4V5M15 8V9" /></svg>
                </TaskSlot>
                <TaskSlot $w={48} $ml={5}>
                    <svg width="24" height="24" viewBox="0 0 24 24"><circle cx="12" cy="12" r="12" fill="#1b8fd6" /><path d="M3 14C5 6 19 4 22 12C23 17 16 18 14 16C17 15 17 11 13 11C8 11 7 18 12 22C7 22 3 19 3 14Z" fill="#3bd08f" /></svg>
                </TaskSlot>
                <TaskSlot $w={48}>
                    <svg width="20" height="22" viewBox="0 0 20 22"><path d="M0 5H20V20a2 2 0 0 1-2 2H2a2 2 0 0 1-2-2Z" fill="#f0f0f0" /><path d="M6 5V3a2 2 0 0 1 2-2H12a2 2 0 0 1 2 2V5" fill="none" stroke="#2b9fd8" strokeWidth="1.5" /><rect x="6" y="9" width="3.5" height="3.5" fill="#e8542b" /><rect x="10.5" y="9" width="3.5" height="3.5" fill="#7cb82f" /><rect x="6" y="13.5" width="3.5" height="3.5" fill="#1b9bde" /><rect x="10.5" y="13.5" width="3.5" height="3.5" fill="#f7b900" /></svg>
                </TaskSlot>
                <TaskSlot $w={51} $running>
                    <svg width="22" height="20" viewBox="0 0 22 20"><path d="M0 2H8L10 4H22V20H0Z" fill="#f2c037" /><rect y="6" width="22" height="14" fill="#f7d25c" /><path d="M5 20V13H17V20H14V16H8V20Z" fill="#2f8fc4" /></svg>
                </TaskSlot>
                <TaskSlot $w={48} $active $running>
                    <svg width="20" height="20" viewBox="0 0 20 20"><rect width="20" height="20" fill="#eef3f6" /><path d="M10 3V17M3 10H17M10 1V3M4 4L6 6M16 4L14 6M4 16L6 14M16 16L14 14" stroke="#5a9bbd" strokeWidth="1.3" /></svg>
                </TaskSlot>
                <Tray>
                    <svg width="22" height="22" viewBox="0 0 22 22"><circle cx="11" cy="10" r="9.5" fill="#ee9a2f" /><path d="M6 20a4 4 0 0 1 1-8 5 5 0 0 1 9 1 3.5 3.5 0 0 1 0 7Z" fill="#c7d4e0" /></svg>
                    <TrayItem $w={120} $ml={9}>37°C&nbsp;&nbsp;Mostly sunny</TrayItem>
                    <TrayItem $w={12} $ml={23}>
                        <svg width="12" height="7" viewBox="0 0 12 7" fill="none" stroke="#eee"><path d="M1 6.5L6 1L11 6.5" /></svg>
                    </TrayItem>
                    <TrayItem $w={15} $ml={11}>
                        <svg width="15" height="15" viewBox="0 0 15 15" fill="none" stroke="#eee"><path d="M4 1H14V10H4ZM1 1H3V7H1ZM8 10V14M5 14.5H11" /></svg>
                    </TrayItem>
                    <TrayItem $w={16} $ml={10}>
                        <svg width="16" height="14" viewBox="0 0 16 14" fill="none" stroke="#ccc"><path d="M1 5H3L6 1.5V12.5L3 9H1ZM9 4.5C10 6 10 8 9 9.5M11.5 2.5C13 5 13 9 11.5 11.5" /></svg>
                    </TrayItem>
                    <TrayItem $w={24} $ml={9} $fs={12}>ENG</TrayItem>
                    <Clock>15:12<br />11-04-2023</Clock>
                    <TrayItem $w={16} $ml={16}>
                        <svg width="16" height="17" viewBox="0 0 16 17" fill="none" stroke="#eee"><path d="M.5 1H15.5V13H8.5L6.5 16L6 13H.5Z" /></svg>
                    </TrayItem>
                </Tray>
            </Taskbar>
            <Activate>
                Activate Windows
                <ActivateSub>Go to Settings to activate Windows.</ActivateSub>
            </Activate>
        </Page>
    )
}
